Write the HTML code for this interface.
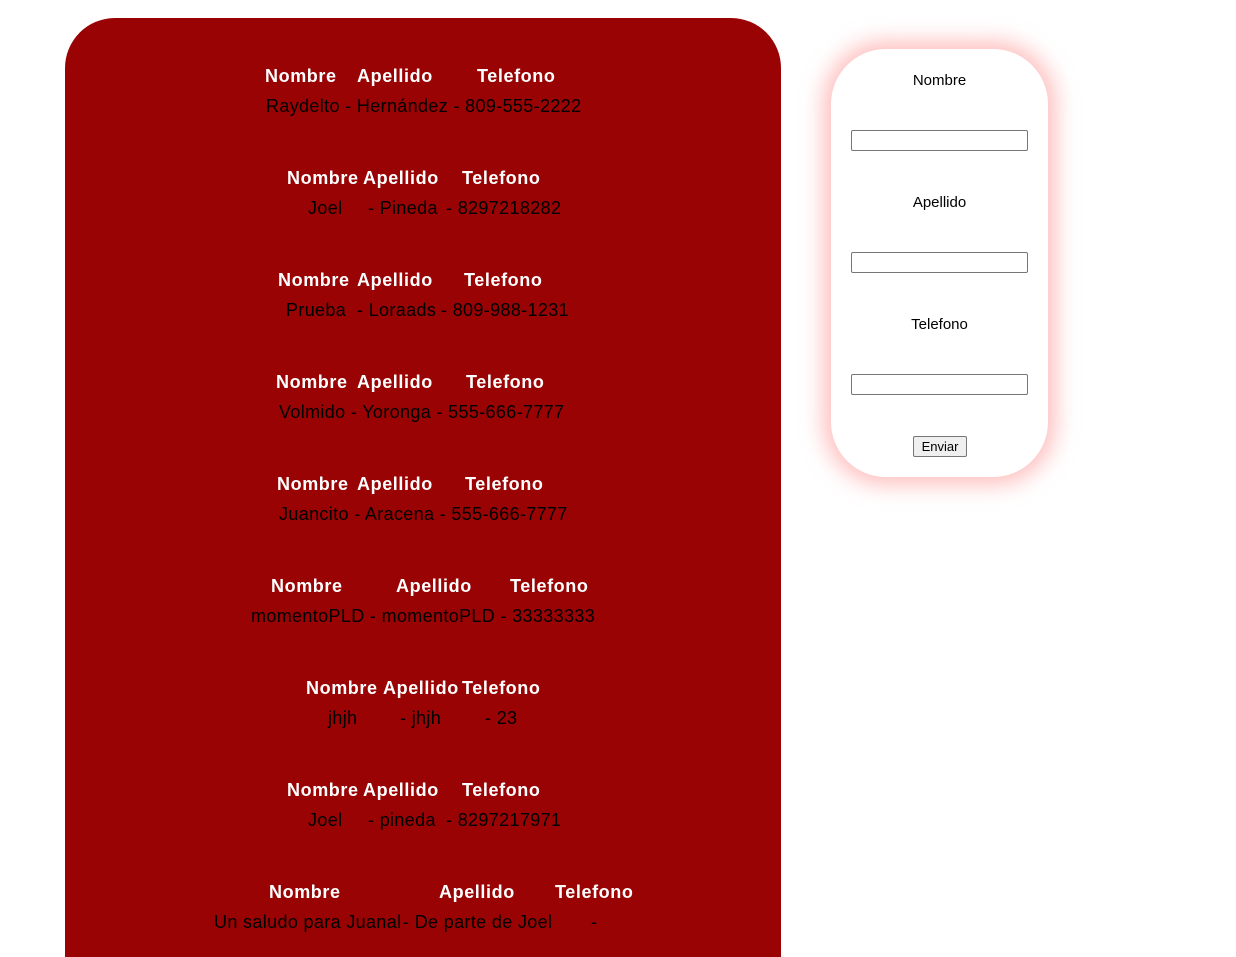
<!DOCTYPE html>
<html><head><meta charset="utf-8"><style>
html,body{margin:0;width:1236px;height:957px;overflow:hidden}
body{background:#fff;position:relative;font-family:"Liberation Sans",sans-serif}
.red{position:absolute;left:65px;top:18px;width:716px;height:939px;background:#990303;border-radius:50px 50px 0 0}
.h,.d{position:absolute;font-size:18px;white-space:pre;line-height:20px}
.h{color:#fff;font-weight:bold;letter-spacing:0.6px}
.d{color:#000;letter-spacing:0.35px}
.card{position:absolute;left:831px;top:49px;width:217px;height:428px;background:#fff;border-radius:55px;box-shadow:0 0 22px 8px rgba(255,150,150,.6)}
.lb{position:absolute;width:217px;text-align:center;font-size:15px;color:#000}
.in{position:absolute;left:20px;width:175px;height:19px;border:1px solid #767676;border-radius:2px;background:#fff}
.btn{position:absolute;left:82px;top:387px;width:52px;height:19px;border:1px solid #767676;border-radius:2px;background:#efefef;font-size:13px;text-align:center;line-height:19px}
</style></head><body>
<div class="red"></div>

<div class="h" style="left:265px;top:66px">Nombre</div><div class="h" style="left:357px;top:66px">Apellido</div><div class="h" style="left:477px;top:66px">Telefono</div>
<div class="d" style="left:266px;top:96px">Raydelto - Hernández - 809-555-2222</div>

<div class="h" style="left:287px;top:168px">Nombre</div><div class="h" style="left:363px;top:168px">Apellido</div><div class="h" style="left:462px;top:168px">Telefono</div>
<div class="d" style="left:308px;top:198px">Joel</div><div class="d" style="left:368px;top:198px">- Pineda</div><div class="d" style="left:446px;top:198px">- 8297218282</div>

<div class="h" style="left:278px;top:270px">Nombre</div><div class="h" style="left:357px;top:270px">Apellido</div><div class="h" style="left:464px;top:270px">Telefono</div>
<div class="d" style="left:286px;top:300px">Prueba</div><div class="d" style="left:357px;top:300px">- Loraads</div><div class="d" style="left:441px;top:300px">- 809-988-1231</div>

<div class="h" style="left:276px;top:372px">Nombre</div><div class="h" style="left:357px;top:372px">Apellido</div><div class="h" style="left:466px;top:372px">Telefono</div>
<div class="d" style="left:279px;top:402px">Volmido - Yoronga - 555-666-7777</div>

<div class="h" style="left:277px;top:474px">Nombre</div><div class="h" style="left:357px;top:474px">Apellido</div><div class="h" style="left:465px;top:474px">Telefono</div>
<div class="d" style="left:279px;top:504px">Juancito - Aracena - 555-666-7777</div>

<div class="h" style="left:271px;top:576px">Nombre</div><div class="h" style="left:396px;top:576px">Apellido</div><div class="h" style="left:510px;top:576px">Telefono</div>
<div class="d" style="left:251px;top:606px">momentoPLD - momentoPLD - 33333333</div>

<div class="h" style="left:306px;top:678px">Nombre</div><div class="h" style="left:383px;top:678px">Apellido</div><div class="h" style="left:462px;top:678px">Telefono</div>
<div class="d" style="left:328px;top:708px">jhjh</div><div class="d" style="left:400px;top:708px">- jhjh</div><div class="d" style="left:485px;top:708px">- 23</div>

<div class="h" style="left:287px;top:780px">Nombre</div><div class="h" style="left:363px;top:780px">Apellido</div><div class="h" style="left:462px;top:780px">Telefono</div>
<div class="d" style="left:308px;top:810px">Joel</div><div class="d" style="left:368px;top:810px">- pineda</div><div class="d" style="left:446px;top:810px">- 8297217971</div>

<div class="h" style="left:269px;top:882px">Nombre</div><div class="h" style="left:439px;top:882px">Apellido</div><div class="h" style="left:555px;top:882px">Telefono</div>
<div class="d" style="left:214px;top:912px">Un saludo para Juanal</div><div class="d" style="left:403px;top:912px">- De parte de Joel</div><div class="d" style="left:591px;top:912px">-</div>

<div class="card">
<div class="lb" style="top:23px">Nombre</div>
<div class="in" style="top:81px"></div>
<div class="lb" style="top:145px">Apellido</div>
<div class="in" style="top:203px"></div>
<div class="lb" style="top:267px">Telefono</div>
<div class="in" style="top:325px"></div>
<div class="btn">Enviar</div>
</div>
</body></html>
